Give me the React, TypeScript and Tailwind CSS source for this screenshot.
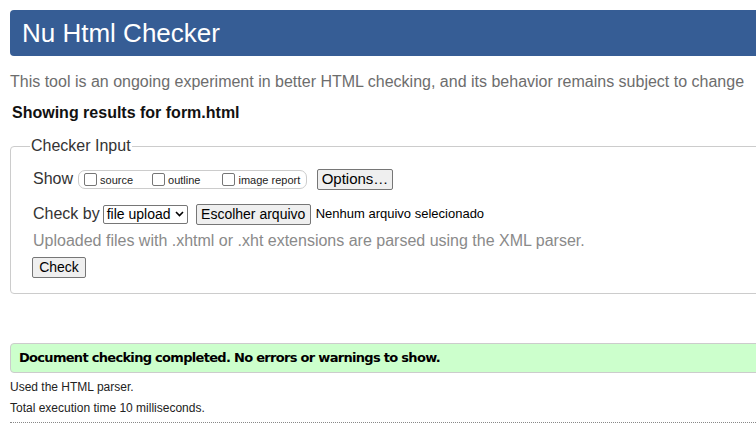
import React from 'react';

const arial = { fontFamily: '"Liberation Sans", Arial, sans-serif' };

const Box: React.FC<{ label: string }> = ({ label }) => (
  <label className="flex items-center">
    <span className="w-[13px] h-[13px] border border-[#767676] rounded-[2px] bg-white" />
    <span className="ml-[3px] text-[11px] text-[#222] leading-none mt-[3px]">{label}</span>
  </label>
);

const Btn: React.FC<{ children: React.ReactNode; className?: string }> = ({ children, className = '' }) => (
  <span
    className={`inline-flex items-center justify-center bg-[#efefef] border border-[#767676] rounded-[2px] text-black ${className}`}
  >
    {children}
  </span>
);

export default function App() {
  return (
    <div className="w-[756px] h-[430px] overflow-hidden bg-white" style={arial}>
      <div className="w-[820px] pl-[10px] pt-[10px]">
        {/* header */}
        <div className="h-[46px] bg-[#365d95] rounded-l-[4px] flex items-center pl-[12px]">
          <h1 className="text-[26px] text-white leading-none">Nu Html Checker</h1>
        </div>

        <p className="mt-[18px] text-[16px] text-[#6d6d6d] leading-none">
          This tool is an ongoing experiment in better HTML checking, and its behavior remains subject to change
        </p>
        <p className="mt-[15px] ml-[2px] text-[16px] font-bold text-[#111] leading-none">
          Showing results for form.html
        </p>

        {/* checker input */}
        <fieldset className="mt-[17px] border border-[#ccc] rounded-l-[4px] pl-[22px] pb-[14px] h-[156px]">
          <legend className="-ml-[3px] px-[1px] text-[16px] text-[#333] leading-none">Checker Input</legend>

          <div className="flex items-center mt-[14px] h-[22px]">
            <span className="text-[16px] text-[#333]">Show</span>
            <div className="ml-[5px] flex items-center h-[19px] w-[229px] border border-[#ccc] rounded-[7px] pl-[5px]">
              <Box label="source" />
              <span className="w-[19px]" />
              <Box label="outline" />
              <span className="w-[22px]" />
              <Box label="image report" />
            </div>
            <Btn className="ml-[10px] w-[76px] h-[21px] text-[15px]">Options…</Btn>
          </div>

          <div className="flex items-center mt-[13px] h-[22px]">
            <span className="text-[16px] text-[#333]">Check by</span>
            <span className="ml-[3px] w-[85px] h-[19px] border border-[#767676] rounded-[2px] flex items-center justify-between pl-[3px] pr-[3px] text-[14px] text-black">
              file upload
              <svg width="9" height="6" viewBox="0 0 9 6">
                <path d="M1 1l3.5 3.5L8 1" stroke="#000" strokeWidth="1.6" fill="none" />
              </svg>
            </span>
            <Btn className="ml-[8px] w-[115px] h-[21px] text-[14px]">Escolher arquivo</Btn>
            <span className="ml-[5px] text-[13px] text-black">Nenhum arquivo selecionado</span>
          </div>

          <p className="mt-[4px] text-[16px] text-[#8a8a8a]">
            Uploaded files with .xhtml or .xht extensions are parsed using the XML parser.
          </p>

          <Btn className="mt-[4px] -ml-[1px] w-[54px] h-[21px] text-[14px]">Check</Btn>
        </fieldset>

        {/* result */}
        <div className="mt-[49px] h-[30px] bg-[#ccffcc] border border-[#ccc] rounded-l-[4px] flex items-center pl-[8px]">
          <span
            className="text-[13px] font-bold text-black tracking-[-0.7px]"
            style={{ fontFamily: '"DejaVu Sans", Verdana, sans-serif' }}
          >
            Document checking completed. No errors or warnings to show.
          </span>
        </div>
        <p className="mt-[8px] text-[12px] text-[#222] leading-none">Used the HTML parser.</p>
        <p className="mt-[9px] text-[12px] text-[#222] leading-none">Total execution time 10 milliseconds.</p>
        <div className="mt-[8px] border-t border-dotted border-[#888]" />
      </div>
    </div>
  );
}
